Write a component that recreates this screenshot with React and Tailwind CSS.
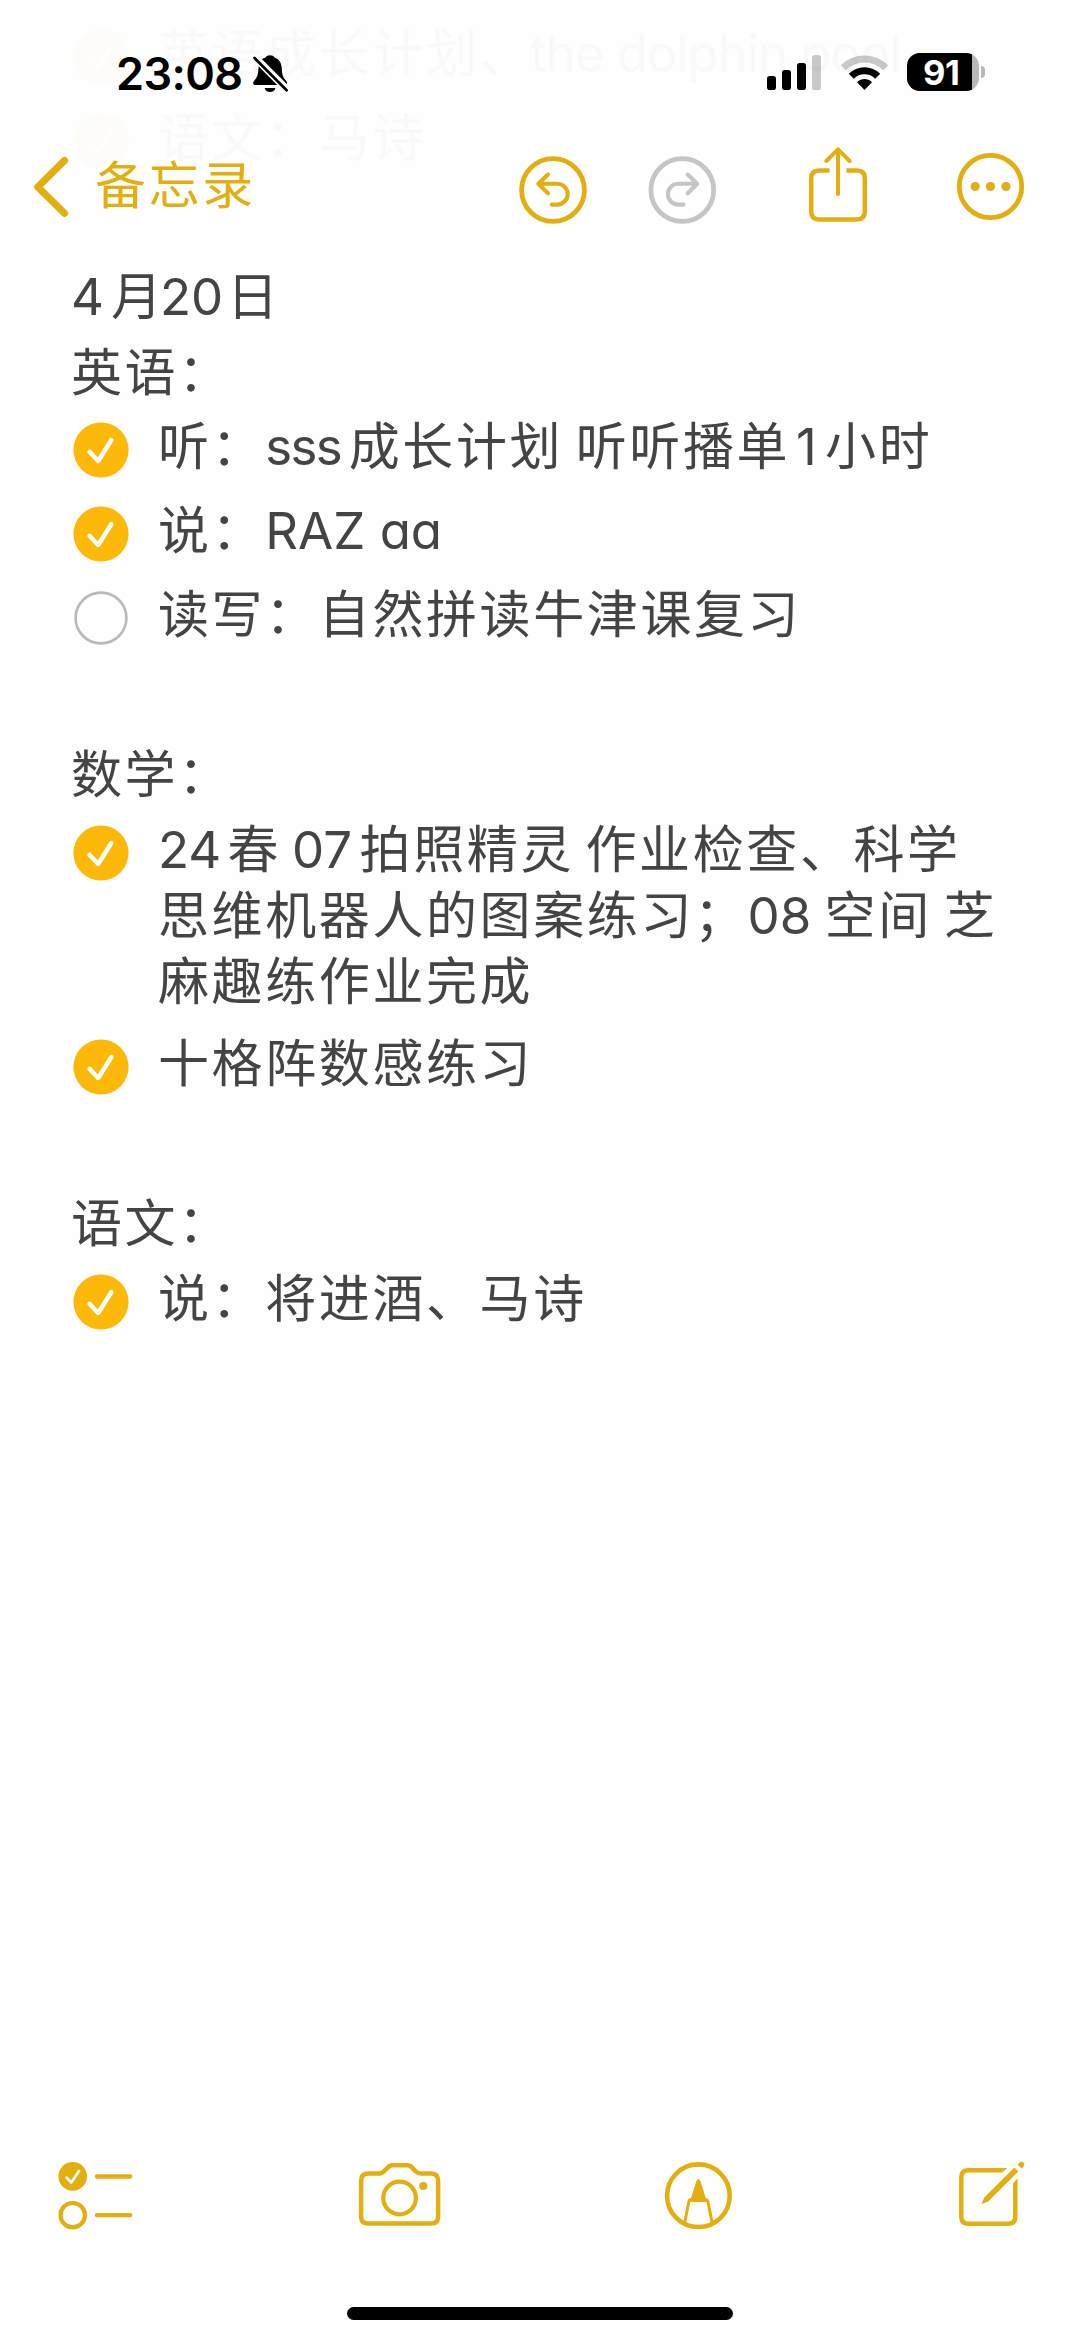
import React from "react";

const CJK = /[\u3000-\u303f\u4e00-\u9fff\uff00-\uffef]/;

/* A part is either a plain run of text or [text, className] for a run with its own measure. */
function Runs({ parts }) {
  return parts.map((part, i) => {
    const [text, extra] = Array.isArray(part) ? part : [part, ""];
    return (
      <span key={i} className={CJK.test(text) ? "tracking-[2.6px]" : `inline-block ${extra}`}>
        {text}
      </span>
    );
  });
}

function Check({ done }) {
  return (
    <svg viewBox="0 0 56 56" className="mt-[8px] h-[56px] w-[56px] shrink-0">
      {done ? (
        <>
          <circle cx="28" cy="28" r="27.6" fill="#fdb909" />
          <path d="M16.5 29.8 L25.2 39 L38.4 18" fill="none" stroke="#fff" strokeWidth="4.4" strokeLinecap="round" strokeLinejoin="round" />
        </>
      ) : (
        <circle cx="28" cy="28" r="25.4" fill="none" stroke="#b9b9b9" strokeWidth="2.6" />
      )}
    </svg>
  );
}

function Line({ lines, className }) {
  return (
    <p className={className}>
      {lines.map((parts, i) => (
        <span key={i} className="block h-[66px] whitespace-pre">
          <Runs parts={parts} />
        </span>
      ))}
    </p>
  );
}

function Item({ done = true, lines, className = "" }) {
  return (
    <li className={`flex ${className}`}>
      <Check done={done} />
      <Line lines={lines} className="ml-[29px]" />
    </li>
  );
}

function StatusBar() {
  return (
    <div className="flex h-[130px] items-start pl-[116px] pt-[52px]">
      <div className="w-[136px] whitespace-nowrap text-[45px] font-semibold leading-[43px] tracking-[-0.6px] text-black">23:08</div>
      <svg viewBox="252 54 37 39" className="mt-[2px] h-[39px] w-[37px]">
        <path d="M255 85 C253 85 252.6 82.6 254 81 C257.600 77 258 74 258.400 69 C259 60 262 58.500 265.500 57.500 C267 54.400 273 54.400 274.500 57.500 C279 59 281.700 63 281.800 69 C282 75 283.500 78 286.300 81 C287.600 82.600 287 85 285 85 Z" />
        <path d="M264.600 88 H275.500 C274.500 93.300 265.600 93.300 264.600 88 Z" />
        <path d="M252 54.500 L289 91.500" stroke="#fefefe" strokeWidth="7.500" />
        <path d="M254.500 58 L286.600 90.300" stroke="#000" strokeWidth="2.700" strokeLinecap="round" />
      </svg>
      <svg viewBox="766 54 56 37" className="ml-[477px] mt-[2px] h-[37px] w-[56px]">
        <rect x="767" y="76" width="9" height="14" rx="2.800" />
        <rect x="782" y="70" width="9" height="20" rx="2.800" />
        <rect x="797" y="63" width="9" height="27" rx="2.800" />
        <rect x="812" y="55" width="9" height="35" rx="2.800" fill="#c8c8c8" />
      </svg>
      <svg viewBox="840 54 49 37" className="ml-[18px] mt-[2px] h-[37px] w-[49px]">
        <path d="M843.300 67.800 A30 30 0 0 1 885.700 67.800" fill="none" stroke="#c8c8c8" strokeWidth="7" />
        <path d="M851.300 76.300 A18.500 18.500 0 0 1 877.700 76.300" fill="none" stroke="#000" strokeWidth="7" />
        <path d="M857 82.300 C861.500 78 867.500 78 872 82.300 L864.500 90 Z" />
      </svg>
      <div className="ml-[18px] mt-[1px] flex items-center">
        <div className="flex h-[38px] w-[72px] overflow-hidden rounded-[13px] bg-[#b8b8b8]">
          <div className="w-[65px] bg-black pl-[16px] text-[34.500px] font-bold leading-[39px] tracking-[-0.500px] text-white">91</div>
        </div>
        <div className="ml-[2px] h-[12px] w-[4px] rounded-r-full bg-[#b8b8b8]" />
      </div>
    </div>
  );
}

const Gold = ({ box, className, children, color = "#e2ae10" }) => (
  <svg viewBox={box} className={className} fill="none" stroke={color} strokeWidth="4.500" strokeLinecap="round" strokeLinejoin="round">
    {children}
  </svg>
);

function NavBar() {
  return (
    <nav className="flex h-[120px] items-start pl-[33px]">
      <Gold box="33 156 37 62" className="mt-[26px] h-[62px] w-[37px]">
        <path d="M64.500 160.500 L37.800 187 L64.500 213.200" strokeWidth="7.200" />
      </Gold>
      <span className="ml-[25px] mt-[23px] w-[423px] text-[51px] leading-[66px] tracking-[2.600px] text-[#e2ae10]">备忘录</span>
      <Gold box="517 155 70 70" className="mt-[25px] h-[70px] w-[70px]">
        <circle cx="552" cy="190" r="31.400" strokeWidth="4.800" />
        <path d="M547 174.500 L537.300 183.800 L547 193.300 M537.800 183.800 H556.300 A10.400 10.400 0 0 1 556.300 204.600 H550.800" strokeWidth="4.100" />
      </Gold>
      <Gold box="646 155 70 70" className="ml-[59px] mt-[25px] h-[70px] w-[70px]" color="#c5c5c7">
        <circle cx="681.300" cy="190" r="31.400" strokeWidth="4.800" />
        <path d="M686.700 174.500 L696.200 183.800 L686.700 193.300 M695.700 183.800 H677.300 A10.400 10.400 0 0 0 677.300 204.600 H682.600" strokeWidth="4.100" />
      </Gold>
      <Gold box="806 146 62 78" className="ml-[90px] mt-[16px] h-[78px] w-[62px]">
        <path d="M828.500 170.600 H818 Q810.200 170.600 810.200 178.400 V211.600 Q810.200 219.400 818 219.400 H856 Q863.800 219.400 863.800 211.600 V178.400 Q863.800 170.600 856 170.600 H845.500" strokeLinecap="butt" />
        <path d="M837 150 V194 M825.300 161 L837 149.300 L848.700 161" strokeWidth="4" />
      </Gold>
      <Gold box="954 151 70 70" className="ml-[86px] mt-[21px] h-[70px] w-[70px]">
        <circle cx="989.500" cy="186.500" r="31.200" strokeWidth="4.800" />
        <g fill="#e2ae10" stroke="none">
          <circle cx="974.200" cy="186.500" r="4.600" />
          <circle cx="989.500" cy="186.500" r="4.600" />
          <circle cx="1005" cy="186.500" r="4.600" />
        </g>
      </Gold>
    </nav>
  );
}

function Toolbar() {
  return (
    <footer className="flex h-[152px] items-start pl-[57px]">
      <Gold box="57 2160 77 72" className="h-[72px] w-[77px]">
        <circle cx="72.700" cy="2176.400" r="14.300" fill="#e2ae10" stroke="none" />
        <path d="M66.700 2177.800 L71.300 2182.500 L79 2171" stroke="#fff" strokeWidth="2.700" />
        <circle cx="72.700" cy="2215.200" r="12.200" strokeWidth="4.200" />
        <path d="M96.900 2176.500 H130.200 M96.900 2215.200 H130.200" strokeWidth="4.300" />
      </Gold>
      <Gold box="357 2160 86 72" className="ml-[223px] h-[72px] w-[86px]">
        <path d="M368.500 2173.600 H378.500 Q381.800 2173.600 384 2171.200 L388.500 2166.800 Q390.300 2165.200 392.500 2165.200 H407.500 Q409.700 2165.200 411.300 2166.800 L415.600 2171.200 Q418 2173.600 421.200 2173.600 H430.800 Q438.100 2173.600 438.100 2180.600 V2216.700 Q438.100 2223.600 430.800 2223.600 H368.500 Q361.100 2223.600 361.100 2216.700 V2180.600 Q361.100 2173.600 368.500 2173.600 Z" />
        <circle cx="399.600" cy="2198" r="16.300" strokeWidth="4.200" />
        <circle cx="423.300" cy="2186" r="4.100" fill="#e2ae10" stroke="none" />
      </Gold>
      <Gold box="663 2160 70 72" className="ml-[220px] h-[72px] w-[70px]">
        <circle cx="698.400" cy="2195.700" r="31.300" strokeWidth="4.600" />
        <path d="M690.600 2201.200 L697 2180.700 Q698.400 2177.800 699.800 2180.700 L706.200 2201.200 Z" fill="#e2ae10" stroke="#e2ae10" strokeWidth="1" />
        <path d="M692 2199.700 H690.500 Q689.300 2199.700 689 2201 L684.800 2222 M704.800 2199.700 H706.300 Q707.500 2199.700 707.800 2201 L712 2222" strokeWidth="3" />
      </Gold>
      <Gold box="957 2160 70 72" className="ml-[224px] h-[72px] w-[70px]">
        <path d="M1002.500 2170.300 H968.500 Q961.300 2170.300 961.300 2177.300 V2216.700 Q961.300 2223.700 968.500 2223.700 H1008.200 Q1015.300 2223.700 1015.300 2216.700 V2183" strokeLinecap="butt" />
        <g fill="#e2ae10" stroke="none">
          <path d="M1002.300 2168.050 H1007.300 L1002.300 2172.550 Z" />
          <path d="M1017.550 2183.200 V2178.300 L1013.050 2183.200 Z" />
          <path d="M981.300 2204.300 L984.300 2197.600 L1014.400 2167.600 L1018.300 2171.500 L988.200 2201.500 Z" />
          <path d="M1017.600 2164.700 L1019.600 2162.600 Q1021.700 2160.900 1023.600 2162.600 Q1025.200 2164.400 1023.500 2166.500 L1021.500 2168.500 Z" />
        </g>
      </Gold>
    </footer>
  );
}

/* Checklist rows that have scrolled beneath the translucent header. */
function ScrolledRows() {
  return (
    <ul aria-hidden="true" className="absolute left-[73px] top-[21px] opacity-[0.02]">
      <Item lines={[["英语成长计划、", ["the dolphin pool", "ml-[-3px] tracking-[-1.1px]"]]]} />
      <Item className="mt-[18px]" lines={[["语文：马诗"]]} />
    </ul>
  );
}

export default function App() {
  return (
    <div className="relative flex h-[2340px] w-[1080px] flex-col overflow-hidden bg-[#fefefe] text-[51px] leading-[66px] text-[#444444] [font-family:Inter,'Noto_Sans_CJK_SC',sans-serif] [font-feature-settings:'cv11','calt'_0]">
      <ScrolledRows />
      <StatusBar />
      <NavBar />
      <main className="flex-1 pl-[71px] pt-[14px]">
        <Line lines={[[["4", "w-[40px]"], ["月", ""], ["20", "ml-[-4.600px] w-[67px]"], "日"]]} />
        <Line lines={[["英语："]]} className="mt-[10px]" />
        <ul className="ml-[2px] mt-[8px]">
          <Item
            lines={[
              [
                "听：",
                ["sss", "w-[83.500px] tracking-[-1.600px]"],
                "成长计划",
                [" ", "w-[12.600px]"],
                "听听播单",
                ["1", "ml-[6px] w-[29px]"],
                "小时",
              ],
            ]}
          />
          <Item className="mt-[18px]" lines={[["说：", "RAZ aa"]]} />
          <Item className="mt-[18px]" done={false} lines={[["读写：自然拼读牛津课复习"]]} />
        </ul>
        <Line lines={[["数学："]]} className="mt-[94px]" />
        <ul className="ml-[2px] mt-[9px]">
          <Item
            lines={[
              [
                ["24", "w-[69.500px]"],
                "春",
                [" ", "w-[11px]"],
                ["07", "w-[67.500px]"],
                "拍照精灵",
                [" ", "w-[11.500px]"],
                "作业检查、科学",
              ],
              ["思维机器人的图案练习；", ["08 ", "w-[77px]"], "空间", [" ", "w-[12px]"], "芝"],
              ["麻趣练作业完成"],
            ]}
          />
          <Item className="mt-[16px]" lines={[["十格阵数感练习"]]} />
        </ul>
        <Line lines={[["语文："]]} className="mt-[94px]" />
        <ul className="ml-[2px] mt-[9px]">
          <Item lines={[["说：将进酒、马诗"]]} />
        </ul>
      </main>
      <Toolbar />
      <div className="mb-[20px] ml-[347px] mt-[-5px] h-[13px] w-[386px] rounded-full bg-black" />
    </div>
  );
}
